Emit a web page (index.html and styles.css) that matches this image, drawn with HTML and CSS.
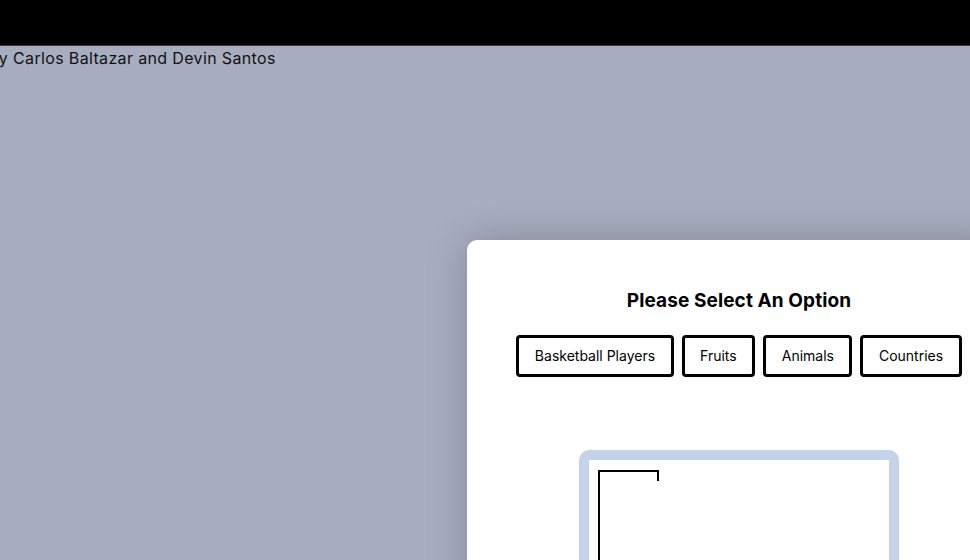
FILE: index.html
```html
<!DOCTYPE html>
<html>
<head>
<meta charset="utf-8">
<link rel="stylesheet" href="styles.css">
</head>
<body>
<header class="topbar"></header>
<p class="credits">By Carlos Baltazar and Devin Santos</p>
<div class="modal">
  <h2 class="modal-title">Please Select An Option</h2>
  <div class="options">
    <button class="option">Basketball Players</button>
    <button class="option">Fruits</button>
    <button class="option">Animals</button>
    <button class="option">Countries</button>
  </div>
  <div class="board">
    <svg class="gallows" width="300" height="100" viewBox="0 0 300 100">
      <path d="M10 100 V11 H69 V21" fill="none" stroke="#000" stroke-width="2"/>
    </svg>
  </div>
</div>
</body>
</html>
```
FILE: styles.css
```css
html, body {
  margin: 0;
  padding: 0;
}
body {
  background: #a7aec0;
  font-family: Inter, "Open Sans", "Liberation Sans", sans-serif;
  width: 970px;
  height: 560px;
  overflow: hidden;
  position: relative;
}
.topbar {
  height: 45px;
  background: #000;
  border-bottom: 1px solid #3a3a3a;
}
.credits {
  margin: 0 0 0 -12px;
  font-size: 16px;
  letter-spacing: 0.35px;
  line-height: 24px;
  color: #111;
}
.modal {
  position: absolute;
  left: 467px;
  top: 240px;
  width: 544px;
  height: 400px;
  background: #fff;
  border-radius: 10px;
  box-shadow: 0 0 40px rgba(0, 0, 0, 0.22);
  display: flex;
  flex-direction: column;
  align-items: center;
  padding-top: 48px;
  box-sizing: border-box;
}
.modal-title {
  margin: 0;
  font-size: 19px;
  letter-spacing: 0.1px;
  line-height: 26px;
  font-weight: 700;
  color: #000;
}
.options {
  display: flex;
  gap: 8px;
  margin-top: 21px;
}
.option {
  height: 42px;
  box-sizing: border-box;
  padding: 0 15.5px 2px;
  background: #fff;
  border: 3px solid #000;
  border-radius: 4px;
  font-family: inherit;
  font-size: 14px;
  color: #000;
}
.board {
  margin-top: 73px;
  width: 320px;
  height: 200px;
  box-sizing: border-box;
  border: 10px solid #c5d3e8;
  border-radius: 10px;
  background: #fff;
}
.gallows {
  display: block;
}
```
